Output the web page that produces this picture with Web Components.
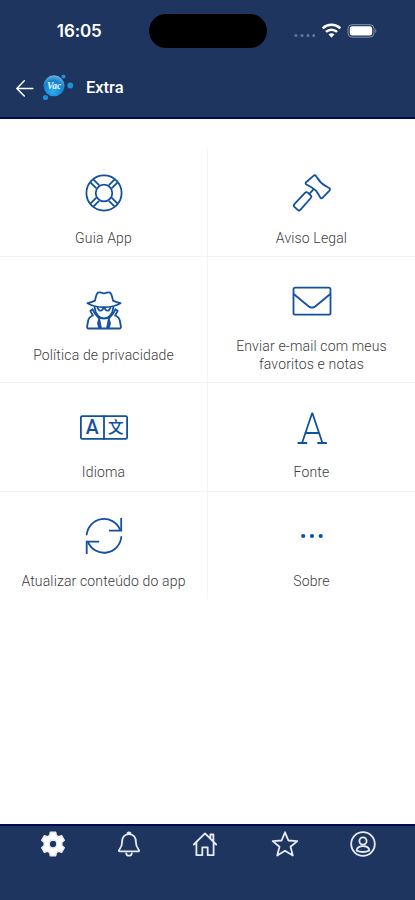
<!DOCTYPE html>
<html lang="pt">
<head>
<meta charset="utf-8">
<meta name="viewport" content="width=device-width, initial-scale=1">
<title>Extra</title>
<style>
  html, body { height: 100%; margin: 0; }
  body {
    background: #fff;
    font-family: Roboto, "Liberation Sans", sans-serif;
    --navy: #1e355f;
    --edge: #050b50;
    --blue: #1250a0;
    --line: #f3f3f4;
  }
</style>
</head>
<body>
<extra-screen></extra-screen>

<script>
const ICONS = {
  guide: `
    <circle cx="24" cy="24" r="17.6"/><circle cx="24" cy="24" r="8.3"/>
    <path d="M15.9 18.8l-5-5M18.8 15.9l-5-5M29.2 15.9l5-5M32.1 18.8l5-5M15.9 29.2l-5 5M18.8 32.1l-5 5M29.2 32.1l5 5M32.1 29.2l5 5"/>`,
  legal: `
    <path d="M25.4 6.900q1.300-1.300 2.600 0l1.200 1.800q3.200 5.500 8.600 8.400l3.200 1.900q1.800 1.200.500 2.600l-6.800 7q-1.400 1.400-2.500-.200l-1.800-3.200q-2.500-4.500-7-6.900l-5-2.800q-1.500-1-.300-2.300z"/>
    <path d="M25.200 20.600l-3.400 3.700M17.200 23.700q1.400-1.200 2.600 0l3 2.800q1.200 1.200 0 2.500L12.300 40.800q-1.300 1.400-2.600.1l-3.300-3.100q-1.300-1.300 0-2.700z"/>`,
  privacy: `
    <path d="M7.500 17.200q4-1 7.500-2.600 1.300-7.100 3.100-8 1.400-.900 5.900.9 4.500-1.800 5.900-.9 1.800.9 3.100 8 3.500 1.600 7.500 2.600-6.600 4-16.500 4T7.500 17.200z"/>
    <path d="M14.600 21.500q1.500 10.600 9.400 11 7.900-.4 9.400-11M17.500 22l2 2.700 2.400-.3 1-1.700h2.200l1 1.700 2.400.3 2-2.700"/>
    <path d="M12.500 23.200l-2.200 1.700 2.600 4.600q-4 1.500-4.700 5l-1.100 6q-.2 2 1.500 2h30.800q1.700 0 1.500-2l-1.100-6q-.700-3.500-4.700-5l2.600-4.600-2.200-1.700M12.500 23.200q1.900 5 6.500 9l2 10.300M35.500 23.200q-1.900 5-6.500 9l-2 10.300M19.300 32.500l-1.300 5 1.500 5M28.700 32.500l1.300 5-1.500 5"/>`,
  mail: `
    <rect x="5.500" y="10.700" width="37" height="27" rx="1.800"/>
    <path d="M6 17.200l14.500 12q3.500 2.700 7 0l14.500-12"/>`,
  language: `
    <rect x=".900" y="13.200" width="46.200" height="22.700" rx="1.300"/><path d="M24 13.200v22.700"/>
    <text x="12.200" y="31.300" font-family="Roboto" font-weight="500" font-size="19.500">A</text>
    <text x="35.800" y="30.400" font-family="Noto Sans CJK SC" font-weight="500" font-size="15.500">文</text>`,
  font: `
    <path d="M14.300 39.200L24 10.500h.500l9.700 28.700M17.300 30h13.800M10.300 40h8.200M30 40h8.200"/>`,
  refresh: `
    <path d="M6.700 22.500A17.400 17.400 0 0 1 40 17.500M41.300 25A17.400 17.400 0 0 1 8 30.200"/>
    <path d="M41.200 6v12.600H29M6.700 42V29.600h12.500" stroke-linecap="butt" stroke-linejoin="miter"/>`,
  more: `
    <g class="dots"><circle cx="15.200" cy="24" r="2.100"/><circle cx="24" cy="24" r="2.100"/><circle cx="32.700" cy="24" r="2.100"/></g>`
};

const TAB_ICONS = {
  settings: `
    <path fill="#fff" stroke-width="1.500" fill-rule="evenodd" d="M11.300 2.300h5.400l.600 3.200 2.300 1.300 3-1.100 2.700 4.600-2.500 2.100v3.200l2.500 2.100-2.700 4.600-3-1.100-2.300 1.300-.600 3.200h-5.400l-.600-3.200-2.300-1.300-3 1.100-2.700-4.600 2.500-2.100v-3.200L2.700 10.300l2.700-4.600 3 1.100 2.300-1.300zM14 10.100a3.900 3.900 0 1 0 0 7.800 3.900 3.900 0 0 0 0-7.800z"/>`,
  alerts: `
    <path d="M14 4.200c-5 0-6.900 3.500-6.900 7.800 0 4.700-1.300 6-3 8-.500.700-.200 1.300.600 1.300h18.600c.800 0 1.100-.600.600-1.300-1.700-2-3-3.300-3-8 0-4.300-1.900-7.800-6.900-7.800zM12.400 4.200q0-1.900 1.600-1.900t1.600 1.900M11.200 23.500q.500 2.200 2.800 2.200t2.800-2.200"/>`,
  home: `
    <path d="M2.800 14.500L14 3.400l11.200 11.100M5.400 12.300v12.900h5.900v-7.800h5.400v7.800h5.900V12.300M19.400 8.500V4.500h3v7"/>`,
  favorites: `
    <path d="M14 2.300l3.400 8.200 8.900.600-6.800 5.700 2.300 8.700L14 20.700l-7.800 4.800 2.300-8.700-6.800-5.700 8.900-.600z"/>`,
  profile: `
    <circle cx="14" cy="14" r="11.800"/><circle cx="14" cy="11" r="3.600"/>
    <path d="M7.600 20.500c.500-3.700 3.500-4.300 6.400-4.300s5.900.600 6.400 4.300q-2.800 1.500-6.400 1.500t-6.400-1.500z"/>`
};

class StatusBar extends HTMLElement {
  constructor() {
    super();
    this.attachShadow({ mode: 'open' });
    this.shadowRoot.innerHTML = `
      <style>
        :host {
          display: grid;
          grid-template-columns: 1fr 118px 1fr;
          align-items: center;
          height: 62px;
          color: #fff;
        }
        .time {
          padding-left: 10px;
          text-align: center;
          font: 600 17px/20px Inter, sans-serif;
          letter-spacing: -.1px;
        }
        .island { height: 34px; border-radius: 17px; background: #000; }
        .signals { display: flex; align-items: center; padding-left: 26px; }
        svg { display: block; }
      </style>
      <div class="time"><slot></slot></div>
      <div class="island"></div>
      <div class="signals">
        <svg width="84" height="20" viewBox="0 0 84 20">
          <g fill="#65769a"><circle cx="3" cy="14.500" r="1.500"/><circle cx="9" cy="14.500" r="1.500"/><circle cx="15" cy="14.500" r="1.500"/><circle cx="20.700" cy="14.500" r="1.500"/></g>
          <g fill="none" stroke="#fff" stroke-width="2.500">
            <path d="M29.700 7.300a13 13 0 0 1 17.600 0M32.900 10.900a8.300 8.300 0 0 1 11.200 0"/>
          </g>
          <path fill="#fff" d="M35.500 13.300q3-2.300 6 0l-3 3.500z"/>
          <rect x="55" y="3.700" width="26" height="12.500" rx="4" fill="none" stroke="#8290ab"/>
          <rect x="56.800" y="5.300" width="22.400" height="9.300" rx="2.500" fill="#fff"/>
          <path d="M82.300 7.700q2 2.200 0 4.500z" fill="#8290ab"/>
        </svg>
      </div>
    `;
  }
}
customElements.define('status-bar', StatusBar);

class TitleBar extends HTMLElement {
  constructor() {
    super();
    this.attachShadow({ mode: 'open' });
    this.shadowRoot.innerHTML = `
      <style>
        :host {
          display: flex;
          align-items: center;
          height: 52px;
          padding-left: 15px;
          color: #fff;
        }
        svg { display: block; flex: none; }
        .logo { margin-left: 7px; }
        .title {
          margin-left: 11px;
          font: 500 16.5px/22px Roboto, sans-serif;
        }
      </style>
      <svg width="20" height="20" viewBox="0 0 20 20" fill="none" stroke="#fff" stroke-width="1.500" stroke-linecap="round" stroke-linejoin="round">
        <path d="M17.800 10.500H2M9.300 2.800L1.800 10.500l7.500 7.500"/>
      </svg>
      <svg class="logo" width="33" height="30" viewBox="0 0 33 30">
        <defs>
          <radialGradient id="ball" cx=".45" cy=".75" r=".8">
            <stop offset="0" stop-color="#2eaef0"/>
            <stop offset=".6" stop-color="#1380cf"/>
            <stop offset="1" stop-color="#79bce8"/>
          </radialGradient>
        </defs>
        <circle cx="12" cy="12.800" r="10.500" fill="url(#ball)"/>
        <g fill="#1c91d6"><circle cx="21.500" cy="3.500" r="2.100"/><circle cx="28.300" cy="12.500" r="2.900"/><circle cx="3.500" cy="24.500" r="2.600"/></g>
        <text x="12" y="15.500" text-anchor="middle" fill="#eaf8ff" font-family="Liberation Serif" font-style="italic" font-weight="bold" font-size="9.500">Vac</text>
      </svg>
      <div class="title"><slot></slot></div>
    `;
  }
}
customElements.define('title-bar', TitleBar);

class MenuTile extends HTMLElement {
  constructor() {
    super();
    this.attachShadow({ mode: 'open' });
    this.shadowRoot.innerHTML = `
      <style>
        :host {
          box-sizing: border-box;
          display: flex;
          flex-direction: column;
          align-items: center;
          justify-content: center;
          gap: 12px;
          padding: 20px 12px 10px;
          border-bottom: 1px solid var(--line);
        }
        svg {
          flex: none;
          fill: none;
          stroke: var(--blue);
          stroke-width: 1.8;
          stroke-linecap: round;
          stroke-linejoin: round;
        }
        text, .dots { fill: var(--blue); stroke: none; text-anchor: middle; }
        .label {
          color: #3c3c3c;
          font: 300 14px/18px Roboto, sans-serif;
          letter-spacing: .15px;
          text-align: center;
        }
      </style>
      <svg width="48" height="48" viewBox="0 0 48 48">${ICONS[this.getAttribute('icon')] || ''}</svg>
      <div class="label"><slot></slot></div>
    `;
  }
}
customElements.define('menu-tile', MenuTile);

class MenuGrid extends HTMLElement {
  constructor() {
    super();
    this.attachShadow({ mode: 'open' });
    this.shadowRoot.innerHTML = `
      <style>
        :host {
          display: grid;
          grid-template-columns: 207px 1fr;
          grid-template-rows: 108px 126px 109px 108px;
        }
        ::slotted(:nth-child(even)) { border-left: 1px solid var(--line); }
        ::slotted(:nth-last-child(-n+2)) { border-bottom-color: transparent; }
      </style>
      <slot></slot>
    `;
  }
}
customElements.define('menu-grid', MenuGrid);

class TabBar extends HTMLElement {
  constructor() {
    super();
    this.attachShadow({ mode: 'open' });
    const tabs = Object.keys(TAB_ICONS).map(name => `
      <svg width="28" height="28" viewBox="0 0 28 28" aria-label="${name}">${TAB_ICONS[name]}</svg>`).join('');
    this.shadowRoot.innerHTML = `
      <style>
        :host {
          box-sizing: border-box;
          display: grid;
          grid-template-columns: 75.500px 76px 80px 78px 28px;
          align-items: start;
          height: 76px;
          padding: 4px 0 0 39px;
          background: var(--navy);
          border-top: 2px solid var(--edge);
        }
        svg {
          fill: none;
          stroke: #e8ebf5;
          stroke-width: 1.8;
          stroke-linejoin: round;
          stroke-linecap: round;
        }
      </style>
      ${tabs}
    `;
  }
}
customElements.define('tab-bar', TabBar);

class ExtraScreen extends HTMLElement {
  constructor() {
    super();
    this.attachShadow({ mode: 'open' });
    this.shadowRoot.innerHTML = `
      <style>
        :host {
          display: flex;
          flex-direction: column;
          height: 100vh;
          background: #fff;
        }
        header {
          box-sizing: border-box;
          height: 119px;
          background: var(--navy);
          border-bottom: 2px solid var(--edge);
        }
        main { flex: 1; padding-top: 30px; }
      </style>
      <header>
        <status-bar>16:05</status-bar>
        <title-bar>Extra</title-bar>
      </header>
      <main>
        <menu-grid>
          <menu-tile icon="guide">Guia App</menu-tile>
          <menu-tile icon="legal">Aviso Legal</menu-tile>
          <menu-tile icon="privacy">Política de privacidade</menu-tile>
          <menu-tile icon="mail">Enviar e-mail com meus favoritos e notas</menu-tile>
          <menu-tile icon="language">Idioma</menu-tile>
          <menu-tile icon="font">Fonte</menu-tile>
          <menu-tile icon="refresh">Atualizar conteúdo do app</menu-tile>
          <menu-tile icon="more">Sobre</menu-tile>
        </menu-grid>
      </main>
      <tab-bar></tab-bar>
    `;
  }
}
customElements.define('extra-screen', ExtraScreen);
</script>
</body>
</html>
